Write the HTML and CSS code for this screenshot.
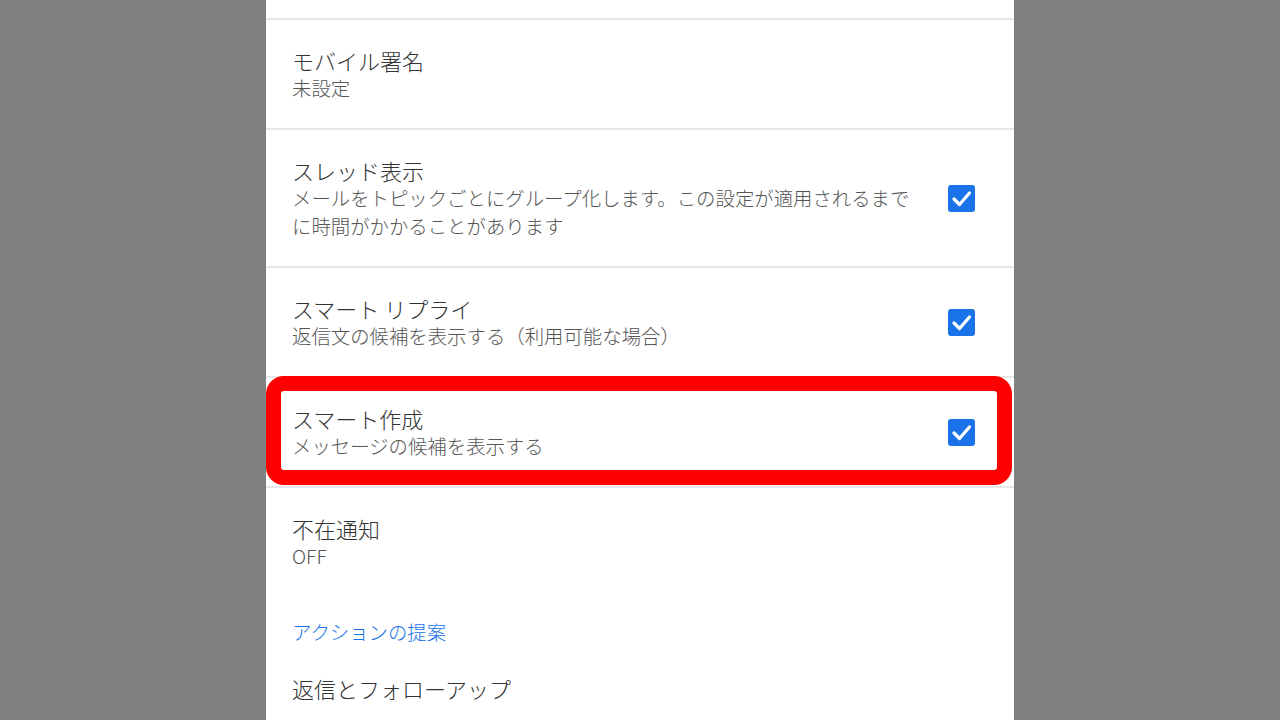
FILE: index.html
```html
<!DOCTYPE html>
<html lang="ja">
<head>
<meta charset="utf-8">
<title>設定</title>
<link rel="stylesheet" href="styles.css">
</head>
<body>
<div class="panel">
  <div class="stub"></div>

  <div class="row">
    <div class="text">
      <div class="title">モバイル署名</div>
      <div class="sub">未設定</div>
    </div>
  </div>

  <div class="row">
    <div class="text">
      <div class="title">スレッド表示</div>
      <div class="sub">メールをトピックごとにグループ化します。この設定が適用されるまでに時間がかかることがあります</div>
    </div>
    <svg class="check" viewBox="0 0 27 27" aria-hidden="true"><rect width="27" height="27" rx="3" fill="#1a73e8"/><polyline points="6,14 11.5,19.5 21.5,8" fill="none" stroke="#fff" stroke-width="3.2" stroke-linecap="round" stroke-linejoin="round"/></svg>
  </div>

  <div class="row">
    <div class="text">
      <div class="title">スマート リプライ</div>
      <div class="sub">返信文の候補を表示する（利用可能な場合）</div>
    </div>
    <svg class="check" viewBox="0 0 27 27" aria-hidden="true"><rect width="27" height="27" rx="3" fill="#1a73e8"/><polyline points="6,14 11.5,19.5 21.5,8" fill="none" stroke="#fff" stroke-width="3.2" stroke-linecap="round" stroke-linejoin="round"/></svg>
  </div>

  <div class="row highlighted">
    <div class="text">
      <div class="title">スマート作成</div>
      <div class="sub">メッセージの候補を表示する</div>
    </div>
    <svg class="check" viewBox="0 0 27 27" aria-hidden="true"><rect width="27" height="27" rx="3" fill="#1a73e8"/><polyline points="6,14 11.5,19.5 21.5,8" fill="none" stroke="#fff" stroke-width="3.2" stroke-linecap="round" stroke-linejoin="round"/></svg>
    <div class="mark"></div>
  </div>

  <div class="row plain">
    <div class="text">
      <div class="title">不在通知</div>
      <div class="sub">OFF</div>
    </div>
  </div>

  <div class="section">アクションの提案</div>
  <div class="row plain last">
    <div class="text">
      <div class="title">返信とフォローアップ</div>
    </div>
  </div>
</div>
</body>
</html>
```

FILE: styles.css
```css
html, body {
  margin: 0;
  padding: 0;
}
body {
  background: #808080;
  height: 720px;
  overflow: hidden;
  font-family: "Noto Sans CJK JP", "Noto Sans", sans-serif;
}
.panel {
  width: 748px;
  height: 720px;
  margin: 0 auto;
  background: #ffffff;
  overflow: hidden;
}
.stub {
  height: 18px;
  border-bottom: 2px solid #e8e8e8;
}
.row {
  position: relative;
  display: flex;
  align-items: center;
  padding: 26px 39px 26px 26px;
  border-bottom: 2px solid #e8e8e8;
}
.row.plain {
  border-bottom: none;
}
.row.last {
  padding-top: 28px;
}
.text {
  width: 630px;
}
.title {
  font-size: 22px;
  font-weight: 300;
  line-height: 28px;
  color: #333333;
}
.sub {
  font-size: 19.4px;
  font-weight: 300;
  line-height: 28px;
  color: #555555;
}
.check {
  width: 27px;
  height: 27px;
  margin-left: auto;
  flex: none;
}
.section {
  padding: 22px 26px 0;
  font-size: 19.4px;
  font-weight: 300;
  line-height: 28px;
  color: #1a73e8;
}
.mark {
  position: absolute;
  top: -2px;
  left: 0;
  right: 2px;
  bottom: 1px;
  border: 15px solid #ff0000;
  border-radius: 18px;
  pointer-events: none;
}
```
